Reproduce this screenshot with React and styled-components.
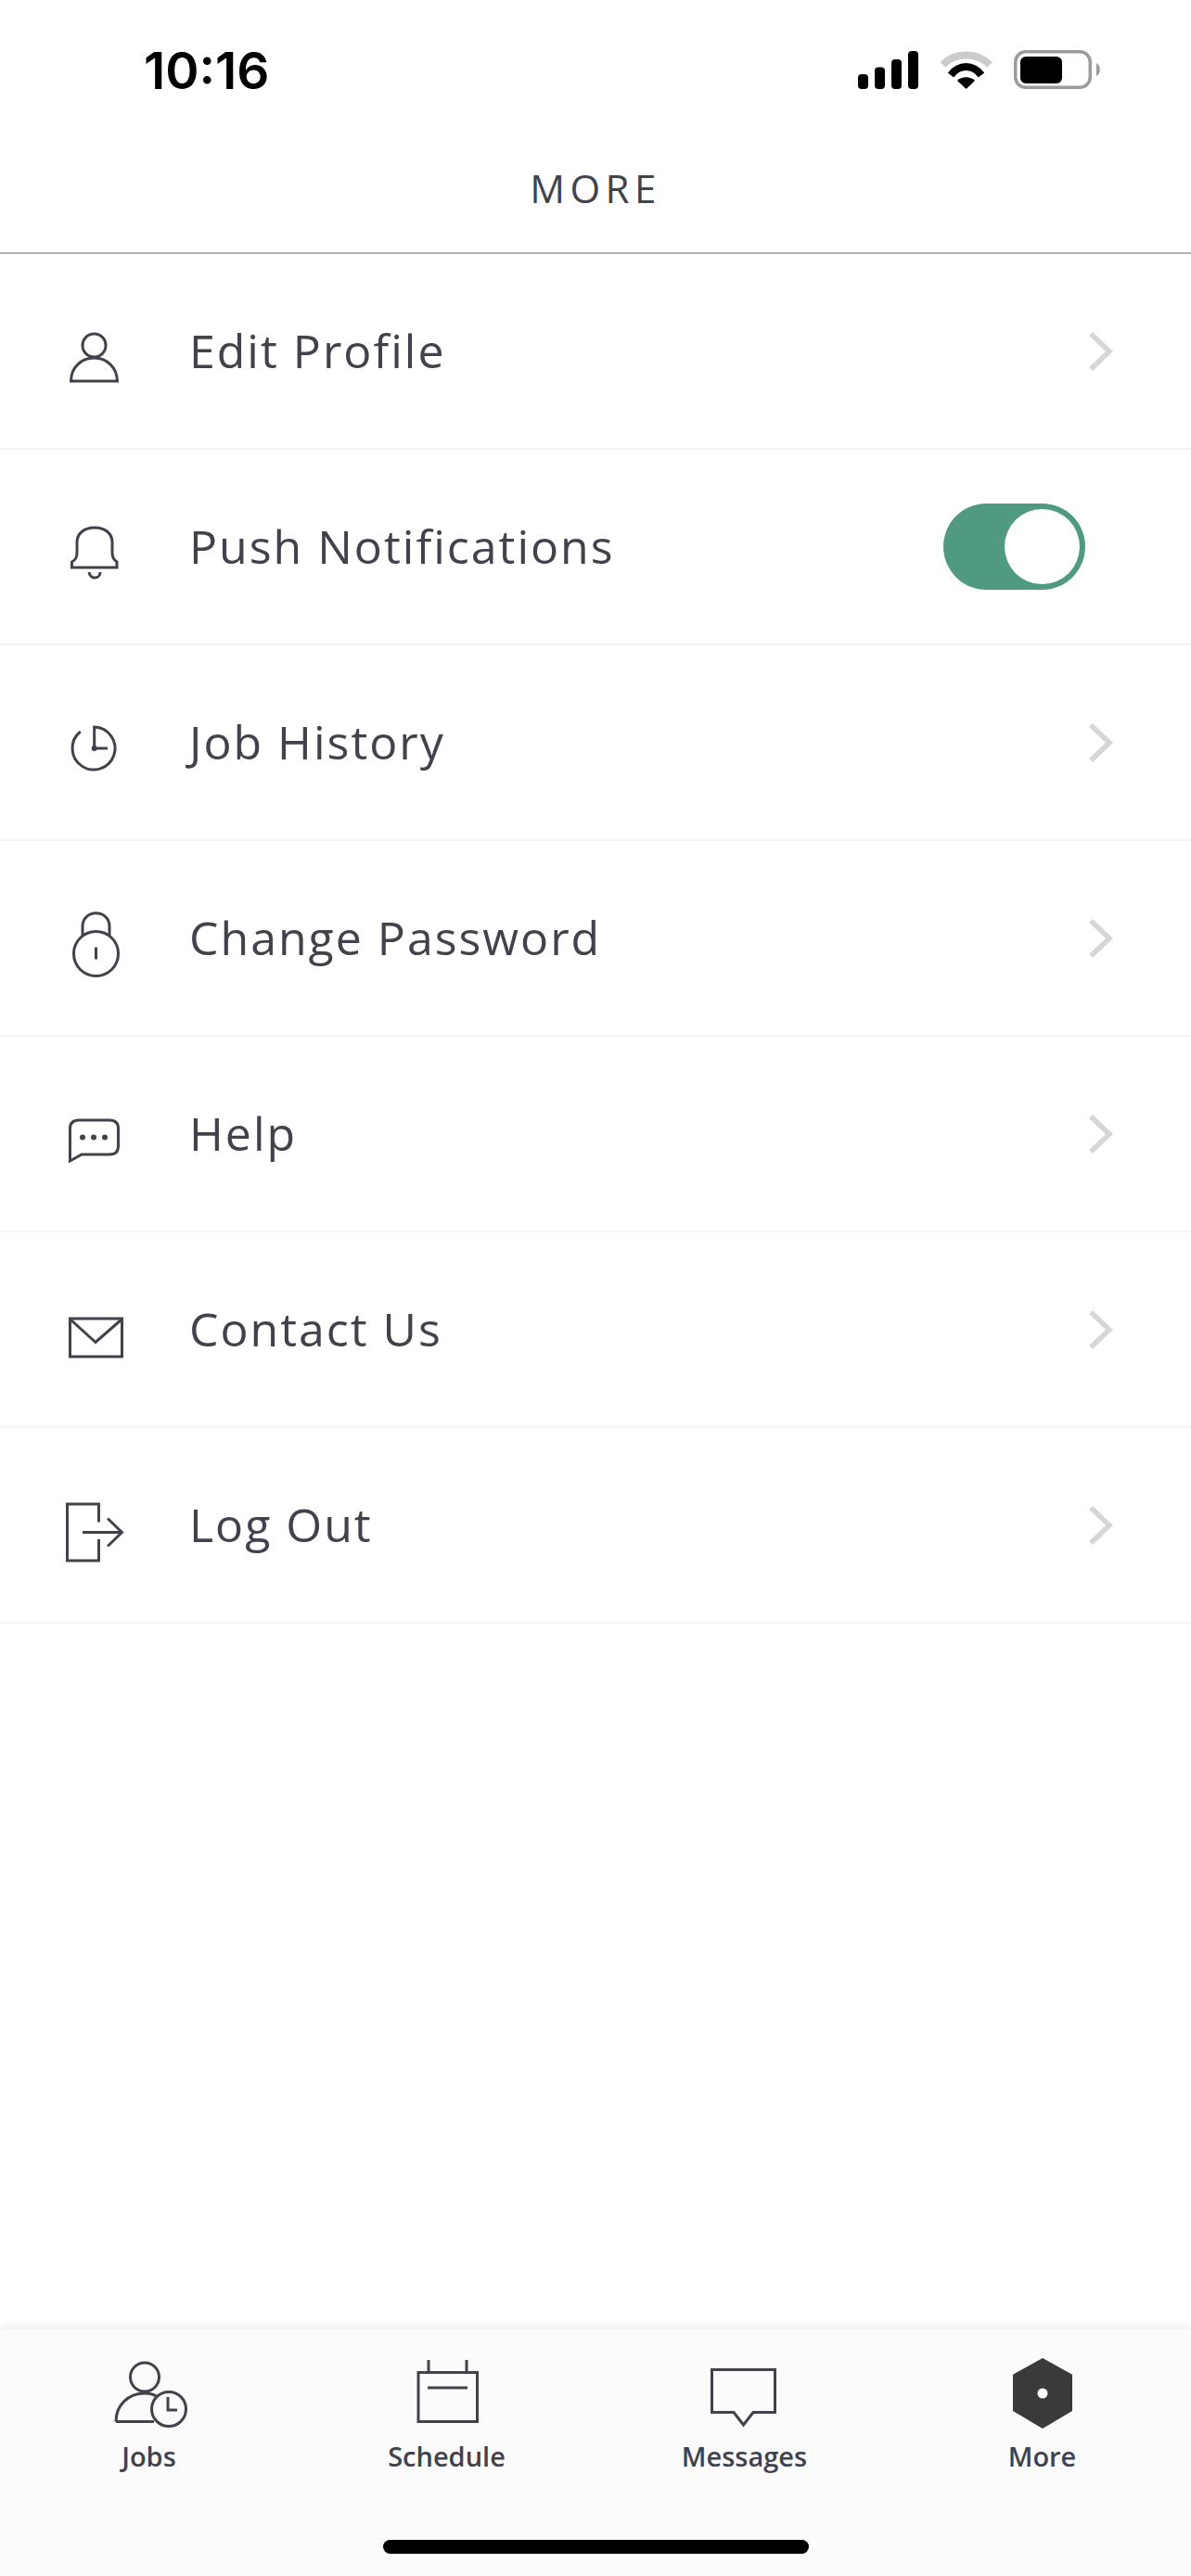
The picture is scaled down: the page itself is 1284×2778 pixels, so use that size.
import React from "react";
import styled, { createGlobalStyle } from "styled-components";

const GlobalStyle = createGlobalStyle`
  html, body {
    margin: 0;
    padding: 0;
    background: #ffffff;
  }
  * {
    box-sizing: border-box;
  }
`;

const Page = styled.div`
  width: 1284px;
  height: 2778px;
  display: flex;
  flex-direction: column;
  background: #ffffff;
  font-family: "Open Sans", "Noto Sans", sans-serif;
  color: #42424c;
  overflow: hidden;
`;

const StatusBar = styled.div`
  height: 132px;
  flex-shrink: 0;
  display: flex;
  justify-content: space-between;
  align-items: flex-start;
  padding: 46px 94px 0 155px;
`;

const Time = styled.div`
  font-family: Inter, "Liberation Sans", sans-serif;
  font-size: 55px;
  font-weight: 600;
  line-height: 60px;
  letter-spacing: 0;
  color: #000000;
`;

const StatusIcons = styled.svg`
  display: block;
  margin-top: 8px;
`;

const Header = styled.div`
  height: 142px;
  flex-shrink: 0;
  display: flex;
  align-items: center;
  justify-content: center;
  border-bottom: 2px solid #b0b0b0;
`;

const Title = styled.h1`
  margin: 0;
  font-size: 42px;
  font-weight: 400;
  letter-spacing: 5.5px;
  color: #42424c;
`;

const Menu = styled.div`
  flex: 1;
  display: flex;
  flex-direction: column;
`;

const Row = styled.div`
  height: 211px;
  flex-shrink: 0;
  display: flex;
  align-items: center;
  padding: 0 84px 0 70px;
  border-bottom: 2px solid #f4f4f4;
`;

const IconSlot = styled.svg.attrs({
  width: 70,
  height: 84,
  viewBox: "0 0 70 84",
})`
  display: block;
  flex-shrink: 0;
  margin: 14px 64px 0 0;
  fill: none;
  stroke: #42424c;
  stroke-width: 3;
`;

const Label = styled.span`
  flex: 1;
  padding-bottom: 2px;
  font-size: 50px;
  letter-spacing: 2px;
  color: #42424c;
`;

const Chevron = styled.svg`
  display: block;
`;

const Toggle = styled.div`
  width: 153px;
  height: 93px;
  margin-right: 30px;
  padding: 6px;
  border-radius: 47px;
  background: #4f9a80;
  display: flex;
  justify-content: flex-end;
`;

const Knob = styled.div`
  width: 81px;
  height: 81px;
  border-radius: 50%;
  background: #ffffff;
`;

const TabBar = styled.div`
  position: relative;
  height: 266px;
  flex-shrink: 0;
  display: grid;
  grid-template-columns: repeat(4, 321px);
  background: #fbfbfb;
  box-shadow: 0 -4px 8px rgba(0, 0, 0, 0.06);
`;

const Tab = styled.div`
  display: flex;
  flex-direction: column;
  align-items: center;
  padding-top: 30px;
`;

const TabIcon = styled.svg`
  display: block;
  flex-shrink: 0;
  fill: none;
  stroke: #42424c;
  stroke-width: 3;
`;

const TabLabel = styled.span`
  margin-top: 9px;
  font-size: 29px;
  font-weight: 600;
  line-height: 40px;
  color: #42424c;
`;

const HomeIndicator = styled.div`
  position: absolute;
  left: 413px;
  top: 227px;
  width: 459px;
  height: 15px;
  border-radius: 8px;
  background: #000000;
`;

const Dots = styled.g`
  fill: #42424c;
  stroke: none;
`;

const PersonIcon = () => (
  <IconSlot>
    <circle cx="31.5" cy="28.5" r="12.5" />
    <path d="M6.5 67 C6.5 52 18 42 31.5 42 C45 42 56 52 56.5 67 Z" />
  </IconSlot>
);

const BellIcon = () => (
  <IconSlot>
    <path d="M7.5 57 L7.5 51 C11 49 13 47 13 41 L13 30 C13 20 21 14 32 14 C43 14 51 20 51 30 L51 41 C51 47 53 49 56 51 L56 57 Z" />
    <path d="M26 62 C27 70 38 70 38 62" />
  </IconSlot>
);

const ClockIcon = () => (
  <IconSlot>
    <path d="M16.7 23 A23 23 0 1 0 31.7 18 L31.7 41 L46 41" />
    <Dots>
      <circle cx="31.7" cy="41" r="3" />
    </Dots>
  </IconSlot>
);

const LockIcon = () => (
  <IconSlot>
    <path d="M19 37 L19 22 C19 3 48 3 48 22 L48 37" />
    <circle cx="33.5" cy="51.5" r="24" fill="#ffffff" />
    <path d="M33.5 44.5 L33.5 57.5" />
  </IconSlot>
);

const ChatIcon = () => (
  <IconSlot>
    <path d="M5.5 64 L5.5 29 C5.5 23 9 20 15 20 L48 20 C54 20 57.5 23 57.5 29 L57.5 48 C57.5 54 54 57 48 57 L18 57 Z" />
    <Dots>
      <circle cx="19" cy="38.5" r="3" />
      <circle cx="31" cy="38.5" r="3" />
      <circle cx="43" cy="38.5" r="3" />
    </Dots>
  </IconSlot>
);

const MailIcon = () => (
  <IconSlot>
    <rect x="5.5" y="23" width="56" height="41" />
    <path d="M6 24 L33 48.5 L61 24" />
  </IconSlot>
);

const LogoutIcon = () => (
  <IconSlot>
    <path d="M36.5 31.5 L36.5 12 L2.5 12 L2.5 73 L36.5 73 L36.5 50" />
    <path d="M19 42.5 L61 42.5 M46 27.5 L61.5 42.5 L46 57.5" />
  </IconSlot>
);

const items = [
  { label: "Edit Profile", Icon: PersonIcon },
  { label: "Push Notifications", Icon: BellIcon, toggle: true },
  { label: "Job History", Icon: ClockIcon },
  { label: "Change Password", Icon: LockIcon },
  { label: "Help", Icon: ChatIcon },
  { label: "Contact Us", Icon: MailIcon },
  { label: "Log Out", Icon: LogoutIcon },
];

const tabs = [
  {
    label: "Jobs",
    icon: (
      <TabIcon width="84" height="78" viewBox="1 0 84 78">
        <circle cx="38" cy="21.5" r="15.5" />
        <path d="M7 69.5 C7 52 20 39 38 39 C44 39 50 41 54 44 M7 69.5 L48 69.5" />
        <circle cx="64" cy="56" r="18.5" fill="#fbfbfb" />
        <path d="M63 43 L63 57 L73 57" />
      </TabIcon>
    ),
  },
  {
    label: "Schedule",
    icon: (
      <TabIcon width="68" height="78" viewBox="0 0 68 78">
        <rect x="3" y="16.5" width="63.5" height="53" />
        <path d="M14 3 L14 16 M55 3 L55 16 M13 33 L56 33" />
      </TabIcon>
    ),
  },
  {
    label: "Messages",
    icon: (
      <TabIcon width="76" height="78" viewBox="0 0 76 78">
        <path d="M2.5 13.5 L70.5 13.5 L70.5 59.5 L47 59.5 L36.5 73 L26 59.5 L2.5 59.5 Z" />
      </TabIcon>
    ),
  },
  {
    label: "More",
    icon: (
      <TabIcon width="66" height="78" viewBox="0 0 66 78">
        <path d="M33 1 L65 18.7 L65 58 L33 77 L1 58 L1 18.7 Z" fill="#3a3a3a" stroke="none" />
        <circle cx="33" cy="39" r="5.5" fill="#ffffff" stroke="none" />
      </TabIcon>
    ),
  },
];

export default function App() {
  return (
    <Page>
      <GlobalStyle />
      <StatusBar>
        <Time>10:16</Time>
        <StatusIcons width="265" height="44" viewBox="0 0 265 44">
          <rect x="0" y="26" width="11" height="16" rx="4" />
          <rect x="18" y="18.5" width="11" height="23.5" rx="4" />
          <rect x="36" y="10" width="11" height="32" rx="4" />
          <rect x="54" y="1" width="11" height="41" rx="4" />
          <path d="M91.5 16 C104 2 129 2 142 16" fill="none" stroke="#cccccc" strokeWidth="8" />
          <path d="M100 27 C109 15 124 15 133 27" fill="none" stroke="#000000" strokeWidth="8" />
          <path d="M107 33 C112 28 121 28 126 33 L116.7 42 Z" />
          <rect x="169.75" y="1.75" width="80.5" height="38.5" rx="11" fill="none" stroke="#9b9b9b" strokeWidth="3.5" />
          <rect x="175" y="7" width="45" height="29" rx="6" />
          <path d="M257 14 C262 16 262 26 257 28 Z" fill="#9b9b9b" />
        </StatusIcons>
      </StatusBar>
      <Header>
        <Title>MORE</Title>
      </Header>
      <Menu>
        {items.map(({ label, Icon, toggle }) => (
          <Row key={label}>
            <Icon />
            <Label>{label}</Label>
            {toggle ? (
              <Toggle>
                <Knob />
              </Toggle>
            ) : (
              <Chevron width="30" height="48" viewBox="0 0 30 48">
                <path d="M6 5 L26 24 L6 43" fill="none" stroke="#d6d6d6" strokeWidth="5.5" />
              </Chevron>
            )}
          </Row>
        ))}
      </Menu>
      <TabBar>
        {tabs.map((tab) => (
          <Tab key={tab.label}>
            {tab.icon}
            <TabLabel>{tab.label}</TabLabel>
          </Tab>
        ))}
        <HomeIndicator />
      </TabBar>
    </Page>
  );
}
